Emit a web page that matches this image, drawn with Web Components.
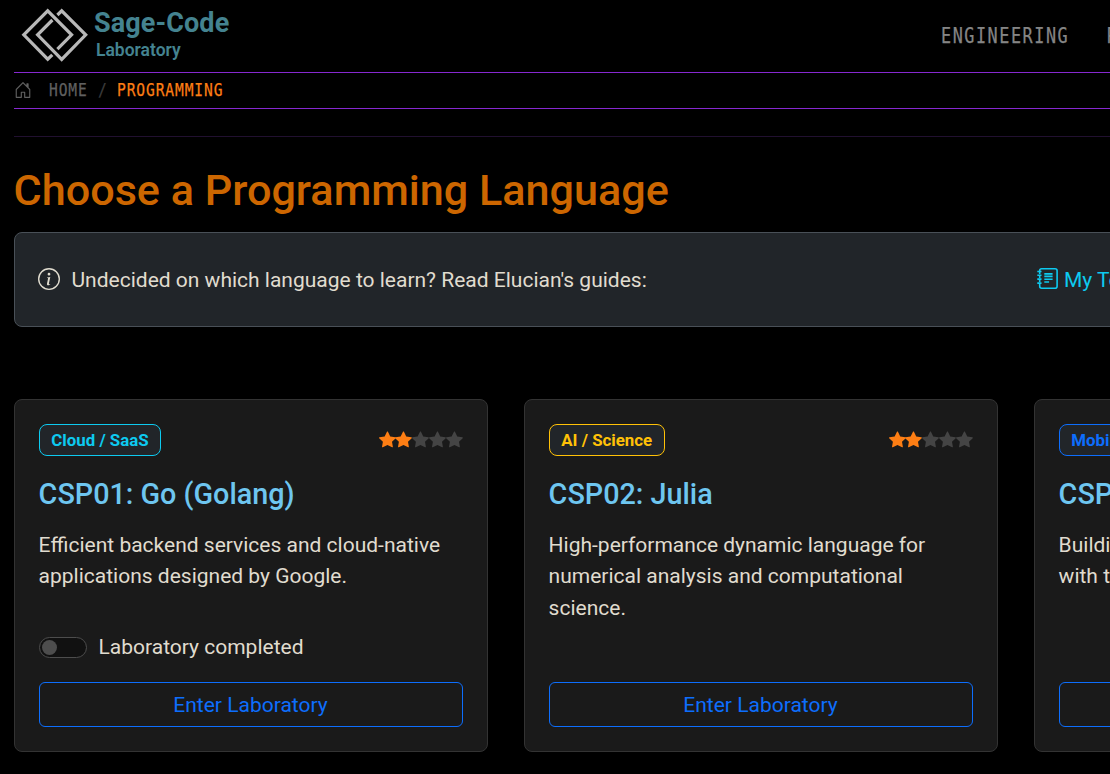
<!DOCTYPE html>
<html lang="en">
<head>
<meta charset="utf-8">
<title>Sage-Code Laboratory</title>
<style>
html,body{margin:0;height:100%;background:#000;overflow:hidden}
body{font-family:Roboto,"Liberation Sans",sans-serif;font-size:21px;line-height:31.5px;color:#e0dccf}
</style>
</head>
<body>
<sage-page></sage-page>
<script>
const define=(name,html,setup)=>customElements.define(name,class extends HTMLElement{
  connectedCallback(){
    if(this.shadowRoot)return;
    const t=document.createElement('template');t.innerHTML=html;
    this.attachShadow({mode:'open'}).append(t.content.cloneNode(true));
    if(setup)setup(this,this.shadowRoot);
  }
});

define('tech-text',`<style>
:host{display:block;flex:none;white-space:nowrap;font-family:"DejaVu Sans Mono","Liberation Mono",monospace}
span{display:block;transform:scaleX(.82);transform-origin:0 50%;-webkit-text-stroke:.25px currentColor}
</style><span><slot></slot></span>`);

define('sage-logo',`<style>
:host{display:flex;color:#448390}
svg{display:block;flex:none}
.name{margin:7px 0 0 6px;font-weight:700;font-size:27px;line-height:32px;white-space:nowrap;letter-spacing:.1px}
.sub{font-size:17.5px;line-height:23px;font-weight:600;margin-left:2px;letter-spacing:0}
</style>
<svg width="68" height="64" viewBox="20 0 68 64" fill="none" stroke="#b8b8b8" stroke-width="3.2"><path d="M52.3 54.8 47.7 59.2 23.8 34.8 47.7 10.8 71.6 34.8 57.4 49.2"/><path d="M57.4 15 61.7 10.8 85.7 34.8 61.7 59.4 37.6 34.8 52.4 20"/></svg>
<div class="name">Sage-Code<div class="sub">Laboratory</div></div>`);

define('site-header',`<style>
:host{display:flex;justify-content:space-between;padding-left:6px;border-bottom:1px solid #8628d0;box-sizing:border-box;height:73px}
nav{display:flex;gap:37.5px;width:169px;flex:none;padding-top:20px;color:#858585;font-size:20.5px;line-height:32px}
tech-text{width:128.5px;letter-spacing:1.87px}
</style><sage-logo></sage-logo><nav><tech-text>ENGINEERING</tech-text><tech-text>RESEARCH</tech-text></nav>`);

define('crumb-bar',`<style>
:host{display:flex;align-items:center;height:35px;border-bottom:1px solid #8628d0;font-size:17.8px;line-height:33px;color:#606060}
svg{flex:none;margin:-1px 17.5px 0 -.5px}
tech-text{letter-spacing:1.08px;height:35px}
.home{width:49px}.sep{width:19px;color:#3c3c3c}.now{color:#fd7e14}
</style>
<svg width="18" height="18" viewBox="0 0 16 16" fill="currentColor"><path d="M8.354 1.146a.5.5 0 0 0-.708 0l-6 6A.5.5 0 0 0 1.5 7.5v7a.5.5 0 0 0 .5.5h4.5a.5.5 0 0 0 .5-.5v-4h2v4a.5.5 0 0 0 .5.5H14a.5.5 0 0 0 .5-.5v-7a.5.5 0 0 0-.146-.354L13 5.793V2.5a.5.5 0 0 0-.5-.5h-1a.5.5 0 0 0-.5.5v1.293zM2.5 14V7.707l5.5-5.5 5.5 5.5V14H10v-4a.5.5 0 0 0-.5-.5h-3a.5.5 0 0 0-.5.5v4z"/></svg>
<tech-text class="home">HOME</tech-text><tech-text class="sep">/</tech-text><tech-text class="now">PROGRAMMING</tech-text>`);

define('guide-alert',`<style>
:host{display:flex;align-items:center;justify-content:space-between;box-sizing:border-box;height:95px;width:1494px;border:1px solid #495057;border-radius:8px;background:#212529;padding:2px 23px 0;white-space:nowrap}
div{display:flex;align-items:center}
.link{width:447px;color:#0dcaf0}
</style>
<div><svg width="22" height="22" viewBox="0 0 16 16" fill="currentColor" style="margin:-4px 11.5px 0 0"><path d="M8 15A7 7 0 1 1 8 1a7 7 0 0 1 0 14m0 1A8 8 0 1 0 8 0a8 8 0 0 0 0 16"/><path d="m8.93 6.588-2.29.287-.082.38.45.083c.294.07.352.176.288.469l-.738 3.468c-.194.897.105 1.319.808 1.319.545 0 1.178-.252 1.465-.598l.088-.416c-.2.176-.492.246-.686.246-.275 0-.375-.193-.304-.533zM9 4.5a1 1 0 1 1-2 0 1 1 0 0 1 2 0"/></svg><slot></slot></div>
<div class="link"><svg width="21" height="21" viewBox="0 0 21 21" fill="none" stroke="currentColor" stroke-width="1.6" style="margin:-4px 6px 0 0"><path d="M2.7 3V2.5Q2.7.8 4.6.8H18Q20.1.8 20.1 2.8V18.2Q20.1 20.2 18 20.2H4.6Q2.7 20.2 2.7 18.3V16"/><path d="M2.7 3.8v2.1M2.7 8v2M2.7 12v2M.3 3.5h4.2M.3 7.3h4.2M.3 11.1h4.2M.3 15.1h4.2M7.3 5.9h8.3M7.3 8.4h8.3M7.3 11.3h8.3M7.3 14h4.8"/></svg>My Top Picks</div>`);

define('star-rating',`<style>:host{display:flex;margin-top:-2px}svg{display:block;width:16.9px;height:16.9px;fill:#444;overflow:visible}svg.on{fill:#fd7e14}</style>`,(el,root)=>{
  const star='M3.612 15.443c-.386.198-.824-.149-.746-.592l.83-4.73L.173 6.765c-.329-.314-.158-.888.283-.95l4.898-.696L7.538.792c.197-.39.73-.39.927 0l2.184 4.327 4.898.696c.441.062.612.636.282.95l-3.522 3.356.83 4.73c.078.443-.36.79-.746.592L8 13.187l-4.389 2.256z';
  for(let i=0;i<5;i++){
    const d=document.createElement('template');
    d.innerHTML='<svg viewBox="0 0 16 16"'+(i<+el.getAttribute('value')?' class="on"':'')+'><path d="'+star+'"/></svg>';
    root.append(d.content);
  }
});

define('topic-badge',`<style>
:host{display:block;box-sizing:border-box;height:32px;border:1px solid var(--tone);border-radius:8px;background:#212529;color:var(--tone);font-size:16.85px;line-height:31px;font-weight:700;padding:0 11.5px 0 11.3px;white-space:nowrap}
</style><slot></slot>`);

define('lab-switch',`<style>
:host{display:flex;align-items:center;line-height:32px}
i{display:block;box-sizing:border-box;width:48px;height:21px;border:1px solid #4d4d4d;border-radius:11px;background:#111;padding:2px;margin:1px 11.5px 0 0}
i::before{content:"";display:block;width:15px;height:15px;border-radius:50%;background:#4d4d4d}
</style><i></i><slot></slot>`);

define('lab-button',`<style>
:host{display:block;box-sizing:border-box;height:45px;border:1px solid #0d6efd;border-radius:6px;color:#0d6efd;text-align:center;line-height:45px;padding-right:1px}
</style><slot></slot>`);

define('course-card',`<style>
:host{display:flex;flex-direction:column;box-sizing:border-box;height:353px;border:1px solid #333;border-radius:8px;background:#1a1a1a;padding:24px}
header{display:flex;justify-content:space-between;align-items:center;height:32px}
h2{margin:21px 0 18.5px -.4px;font-size:28.75px;line-height:34px;font-weight:500;color:#6ec6f0}
p{margin:0 0 0 -.4px}
.end{margin-top:auto}
lab-button{margin-top:19px}
</style>
<header><slot name="badge"></slot><star-rating value="2"></star-rating></header>
<h2><slot name="title"></slot></h2><p><slot></slot></p>
<div class="end"><slot name="switch"></slot><lab-button>Enter Laboratory</lab-button></div>`);

define('sage-page',`<style>
:host{display:block;padding-left:14px;width:1096px;height:774px;overflow:hidden}
hr{border:0;height:1px;background:#211030;margin:27px 0 0}
h1{margin:28px 0 15px -.5px;font-size:43.17px;line-height:52px;font-weight:500;color:#cc6600;white-space:nowrap}
section{display:grid;grid-template-columns:repeat(3,474px);gap:36px;margin-top:72px}
</style>
<site-header></site-header><crumb-bar></crumb-bar><hr>
<h1>Choose a Programming Language</h1>
<guide-alert>Undecided on which language to learn? Read Elucian's guides:</guide-alert>
<section>
<course-card><topic-badge slot="badge" style="--tone:#0dcaf0">Cloud / SaaS</topic-badge><span slot="title">CSP01: Go (Golang)</span>Efficient backend services and cloud-native applications designed by Google.<lab-switch slot="switch">Laboratory completed</lab-switch></course-card>
<course-card><topic-badge slot="badge" style="--tone:#ffc107">AI / Science</topic-badge><span slot="title">CSP02: Julia</span>High-performance dynamic language for numerical analysis and computational science.</course-card>
<course-card><topic-badge slot="badge" style="--tone:#0d6efd">Mobile / UI</topic-badge><span slot="title">CSP03: Dart</span>Building cross-platform applications<br>with the Flutter framework.</course-card>
</section>`);
</script>
</body>
</html>
